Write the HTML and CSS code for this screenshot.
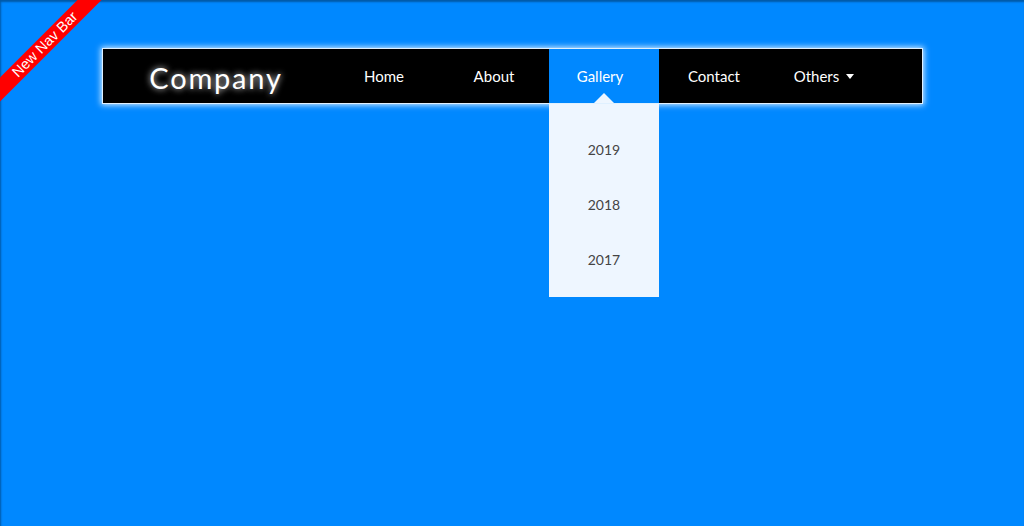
FILE: index.html
```html
<!DOCTYPE html>
<html lang="en">
<head>
<meta charset="utf-8">
<title>New Nav Bar</title>
<link rel="stylesheet" href="styles.css">
</head>
<body>
<div class="page">
  <div class="ribbon">New Nav Bar</div>
  <nav class="navbar">
    <div class="logo">Company</div>
    <ul class="menu">
      <li class="item"><a href="#">Home</a></li>
      <li class="item"><a href="#">About</a></li>
      <li class="item active">
        <a href="#">Gallery</a>
        <ul class="dropdown">
          <li><a href="#">2019</a></li>
          <li><a href="#">2018</a></li>
          <li><a href="#">2017</a></li>
        </ul>
      </li>
      <li class="item"><a href="#">Contact</a></li>
      <li class="item"><a href="#">Others <span class="caret"></span></a></li>
    </ul>
  </nav>
</div>
</body>
</html>
```
FILE: styles.css
```css
* { box-sizing: border-box; }
html, body { margin: 0; padding: 0; height: 100%; }
body {
  background: #0088ff;
  font-family: "Lato", "Open Sans", sans-serif;
  overflow: hidden;
}
.page {
  position: relative;
  height: 526px;
  padding-top: 48px;
  padding-left: 102px;
  box-shadow: inset 1px 2px 2px rgba(0, 0, 0, 0.35);
}
.ribbon {
  position: absolute;
  left: -55px;
  top: 36px;
  width: 200px;
  height: 17px;
  line-height: 17px;
  background: #ff0000;
  color: #fff;
  font-family: "Liberation Sans", Arial, sans-serif;
  font-size: 14.5px;
  text-align: center;
  transform: rotate(-45deg);
}
.navbar {
  display: flex;
  align-items: stretch;
  width: 821px;
  height: 56px;
  background: #000;
  border: 1px solid #dff0ff;
  box-shadow: 0 0 6px 1px rgba(255, 255, 255, 0.85);
}
.logo {
  width: 226px;
  display: flex;
  align-items: center;
  justify-content: center;
  color: #fff;
  font-size: 29px;
  letter-spacing: 1.8px;
  text-shadow: 0 0 6px rgba(255, 255, 255, 0.9);
  padding-top: 3px;
}
.menu {
  display: flex;
  list-style: none;
  margin: 0;
  padding: 0;
}
.item {
  position: relative;
  width: 110px;
}
.item > a {
  display: flex;
  align-items: center;
  justify-content: center;
  height: 100%;
  color: #fff;
  text-decoration: none;
  font-size: 15px;
}
.item.active { background: #0088ff; }
.item.active > a { padding-right: 8px; }
.item.active::after {
  content: "";
  position: absolute;
  left: 50%;
  bottom: 0;
  margin-left: -10px;
  border-left: 10px solid transparent;
  border-right: 10px solid transparent;
  border-bottom: 10px solid #eef6ff;
}
.caret {
  display: inline-block;
  margin-left: 7px;
  border-left: 4.5px solid transparent;
  border-right: 4.5px solid transparent;
  border-top: 5px solid #fff;
  vertical-align: middle;
}
.dropdown {
  position: absolute;
  top: 55px;
  left: 0;
  width: 110px;
  list-style: none;
  margin: 0;
  padding: 19px 0 9px;
  background: #eef6ff;
}
.dropdown li a {
  display: block;
  height: 55px;
  line-height: 54px;
  text-align: center;
  color: #444;
  text-decoration: none;
  font-size: 14px;
}
```
